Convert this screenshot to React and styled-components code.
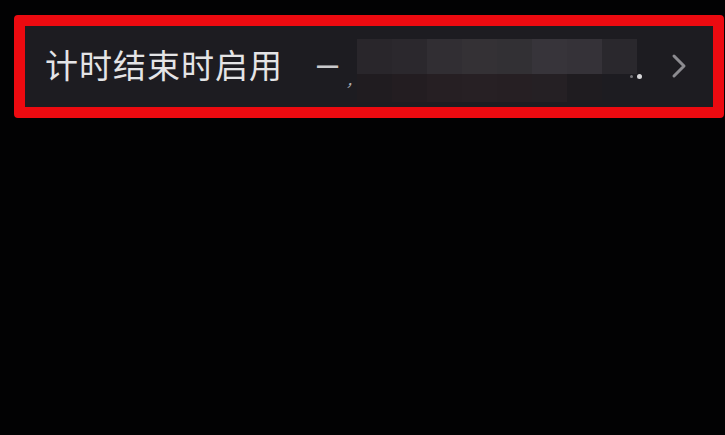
import styled, { createGlobalStyle } from "styled-components";

const GlobalStyle = createGlobalStyle`
  html, body {
    margin: 0;
    padding: 0;
    background: #000;
  }
  body {
    font-family: "Noto Sans CJK SC", "Noto Sans", sans-serif;
  }
`;

const Page = styled.div`
  width: 725px;
  height: 435px;
  padding: 15px 1px 0 14px;
  box-sizing: border-box;
  background: #020203;
`;

const Highlight = styled.div`
  border: 11px solid #ec0a10;
  border-radius: 4px;
  background: #1d1c21;
`;

const Row = styled.div`
  height: 81px;
  display: flex;
  align-items: center;
  padding-left: 20px;
  padding-right: 25px;
`;

const Label = styled.span`
  font-size: 33px;
  letter-spacing: 1px;
  color: #e4e4e6;
  line-height: 1;
  margin-top: -4px;
`;

const Dash = styled.span`
  margin-left: 34px;
  font-family: "Liberation Sans", sans-serif;
  font-size: 38px;
  color: #c9c9cc;
  line-height: 1;
  margin-top: -6px;
`;

const Comma = styled.span`
  margin-left: 12px;
  font-size: 16px;
  color: #a9a9ad;
  margin-top: 22px;
  transform: skewX(-20deg);
`;

const Mosaic = styled.div`
  margin-left: 2px;
  width: 280px;
  height: 63px;
  margin-top: 8px;
  display: grid;
  grid-template-columns: repeat(8, 1fr);
  grid-template-rows: 35px 28px;
`;

const Tile = styled.div`
  background: ${(p) => p.$c};
`;

const Dots = styled.span`
  margin-left: -7px;
  display: flex;
  gap: 4px;
  align-items: center;
  margin-top: 20px;
`;

const Dot = styled.span`
  width: ${(p) => p.$s}px;
  height: ${(p) => p.$s}px;
  border-radius: 50%;
  background: ${(p) => p.$c};
`;

const Chevron = styled.svg`
  margin-left: auto;
  width: 18px;
  height: 26px;
  margin-top: -2px;
`;

const topRow = ["#29262b", "#2b282d", "#312e33", "#343135", "#323034", "#37343a", "#353238", "#2a282d"];
const bottomRow = ["#201c20", "#231d21", "#261f23", "#272024", "#261f23", "#252024", "#1f1c20", "#1d1c21"];

export default function App() {
  return (
    <>
      <GlobalStyle />
      <Page>
        <Highlight>
          <Row>
            <Label>计时结束时启用</Label>
            <Dash>–</Dash>
            <Comma>,</Comma>
            <Mosaic>
              {topRow.map((c, i) => (
                <Tile key={"t" + i} $c={c} />
              ))}
              {bottomRow.map((c, i) => (
                <Tile key={"b" + i} $c={c} />
              ))}
            </Mosaic>
            <Dots>
              <Dot $s={3} $c="#77767b" />
              <Dot $s={5} $c="#d8d8da" />
            </Dots>
            <Chevron viewBox="0 0 18 26">
              <polyline
                points="4,3 14,13 4,23"
                fill="none"
                stroke="#8c8b90"
                strokeWidth="3"
                strokeLinecap="round"
                strokeLinejoin="round"
              />
            </Chevron>
          </Row>
        </Highlight>
      </Page>
    </>
  );
}
